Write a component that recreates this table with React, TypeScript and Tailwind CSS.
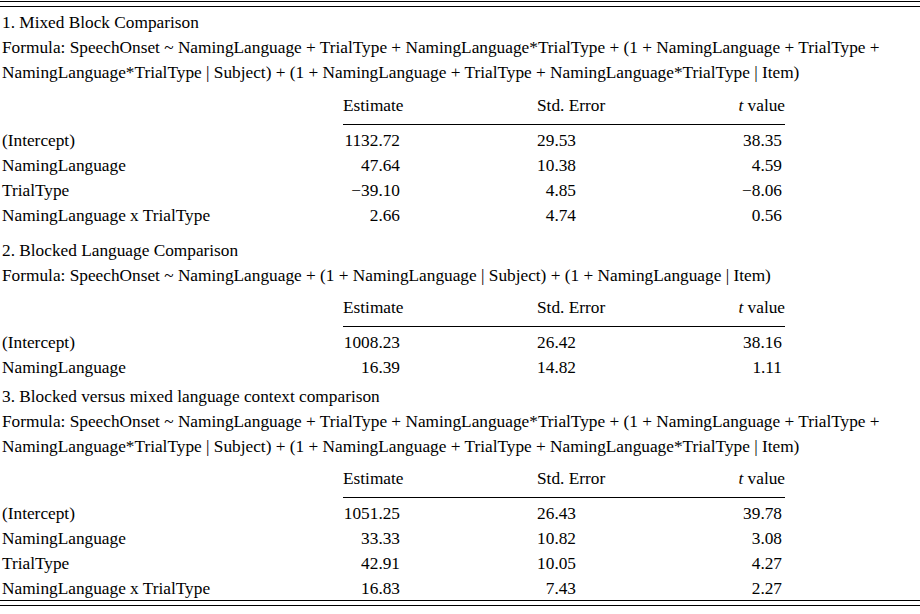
import React from "react";

type Row = { label: string; est: string; se: string; t: string };

const Header = ({ pt }: { pt: string }) => (
  <div className={"flex whitespace-nowrap " + pt}>
    <div className="w-[341px] shrink-0" />
    <div className="flex w-[442px] shrink-0 border-b border-black pb-[6px]">
      <div className="w-[194px] shrink-0">Estimate</div>
      <div className="w-[68px] shrink-0">Std. Error</div>
      <div className="flex-1 text-right">
        <span className="italic">t</span> value
      </div>
    </div>
  </div>
);

const DataRow = ({ r }: { r: Row }) => (
  <div className="flex h-[25px] whitespace-nowrap">
    <div className="w-[341px] shrink-0">{r.label}</div>
    <div className="w-[194px] shrink-0">
      <div className="w-[57px] text-right">{r.est}</div>
    </div>
    <div className="w-[68px] shrink-0">
      <div className="w-[39px] text-right">{r.se}</div>
    </div>
    <div className="w-[180px] shrink-0 pr-[3px] text-right">{r.t}</div>
  </div>
);

const Section = ({
  title,
  formula,
  rows,
  top,
  headerPt,
}: {
  title: string;
  formula: string[];
  rows: Row[];
  top: string;
  headerPt: string;
}) => (
  <div className={top}>
    <div className="h-[25px] whitespace-nowrap">{title}</div>
    {formula.map((f, i) => (
      <div key={i} className="h-[25px] whitespace-nowrap">
        {f}
      </div>
    ))}
    <Header pt={headerPt} />
    <div className="pt-[3px]">
      {rows.map((r, i) => (
        <DataRow key={i} r={r} />
      ))}
    </div>
  </div>
);

export default function App() {
  return (
    <div
      className="w-[920px] h-[614px] bg-white text-black text-[17.3px] leading-[25px] overflow-hidden"
      style={{ fontFamily: '"Liberation Serif", "Times New Roman", serif' }}
    >
      <div className="mt-[1px] h-[6px] border-y border-black" />
      <div className="pl-[2px]">
        <Section
          top="pt-[3px]"
          headerPt="pt-[8px]"
          title="1. Mixed Block Comparison"
          formula={[
            "Formula: SpeechOnset ~ NamingLanguage + TrialType + NamingLanguage*TrialType + (1 + NamingLanguage + TrialType +",
            "NamingLanguage*TrialType | Subject) + (1 + NamingLanguage + TrialType + NamingLanguage*TrialType | Item)",
          ]}
          rows={[
            { label: "(Intercept)", est: "1132.72", se: "29.53", t: "38.35" },
            { label: "NamingLanguage", est: "47.64", se: "10.38", t: "4.59" },
            { label: "TrialType", est: "\u221239.10", se: "4.85", t: "\u22128.06" },
            { label: "NamingLanguage x TrialType", est: "2.66", se: "4.74", t: "0.56" },
          ]}
        />
        <Section
          top="pt-[10px]"
          headerPt="pt-[7px]"
          title="2. Blocked Language Comparison"
          formula={[
            "Formula: SpeechOnset ~ NamingLanguage + (1 + NamingLanguage | Subject) + (1 + NamingLanguage | Item)",
          ]}
          rows={[
            { label: "(Intercept)", est: "1008.23", se: "26.42", t: "38.16" },
            { label: "NamingLanguage", est: "16.39", se: "14.82", t: "1.11" },
          ]}
        />
        <Section
          top="pt-[4px]"
          headerPt="pt-[7px]"
          title="3. Blocked versus mixed language context comparison"
          formula={[
            "Formula: SpeechOnset ~ NamingLanguage + TrialType + NamingLanguage*TrialType + (1 + NamingLanguage + TrialType +",
            "NamingLanguage*TrialType | Subject) + (1 + NamingLanguage + TrialType + NamingLanguage*TrialType | Item)",
          ]}
          rows={[
            { label: "(Intercept)", est: "1051.25", se: "26.43", t: "39.78" },
            { label: "NamingLanguage", est: "33.33", se: "10.82", t: "3.08" },
            { label: "TrialType", est: "42.91", se: "10.05", t: "4.27" },
            { label: "NamingLanguage x TrialType", est: "16.83", se: "7.43", t: "2.27" },
          ]}
        />
      </div>
      <div className="-mt-[1px] h-[6px] border-y border-black" />
    </div>
  );
}
